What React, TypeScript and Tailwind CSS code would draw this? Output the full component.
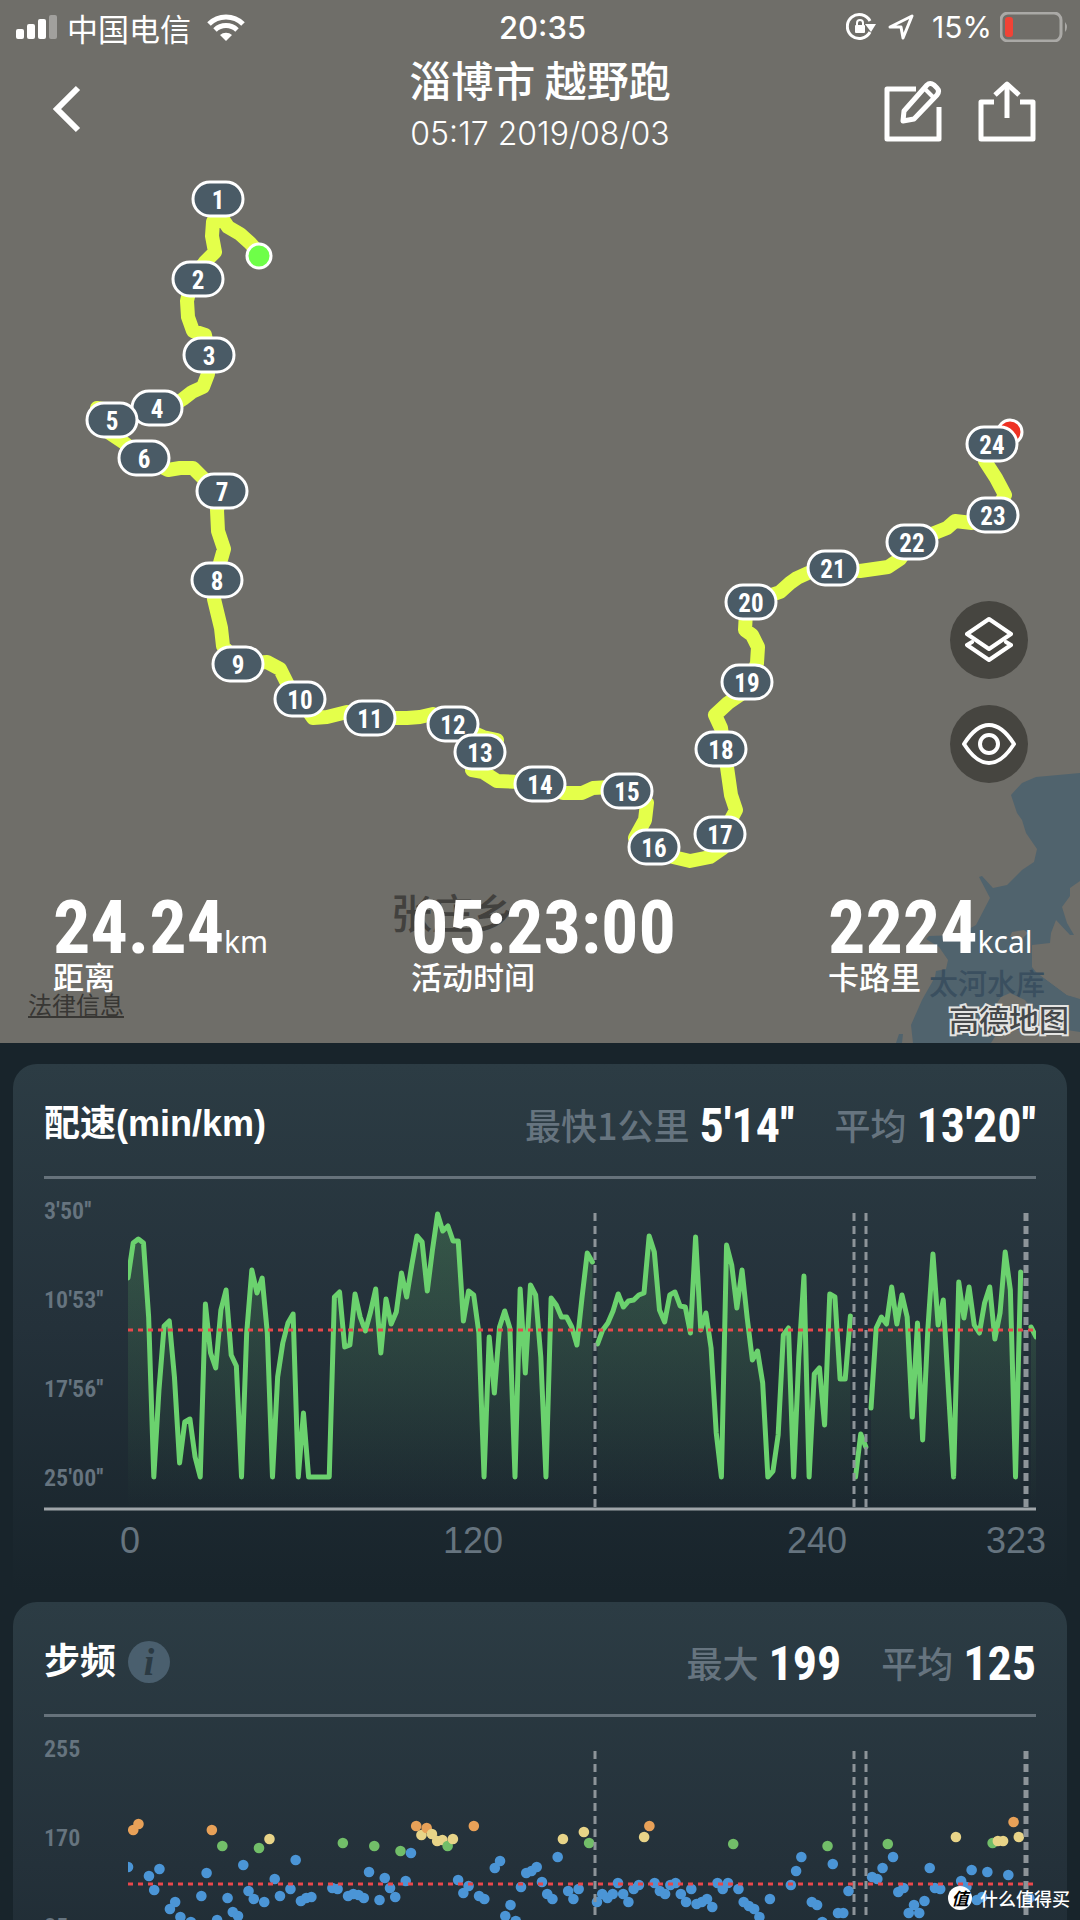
import type { ReactNode } from "react";

const NUM = "font-['Liberation_Sans_Narrow','Roboto_Condensed','Liberation_Sans',sans-serif]";

const PLOT_TOP = 23;
const PLOT_LEFT = 84;
const PLOT_RIGHT = 992;
const PLOT_BOTTOM = 318;

// one entry per sample, each inner list is a stretch between two pauses
const paceRuns = [
  {
    start: 0,
    values: [
      88, 53, 49, 53, 127, 287, 200, 136, 131, 187, 273, 232, 229, 267, 287, 114, 163, 178, 120, 100, 165, 176, 287,
      143, 80, 103, 88, 143, 287, 187, 153, 133, 124, 287, 223, 287, 287, 287, 287, 287, 107, 102, 157, 155, 104, 127,
      141, 122, 99, 163, 109, 134, 122, 83, 107, 75, 46, 52, 101, 60, 24, 41, 36, 51, 51, 131, 101, 105, 143, 287,
      147, 203, 137, 121, 138, 287, 99, 183, 95, 105, 167, 287, 108, 115, 127, 127, 137, 155, 107, 63, 72,
    ],
  },
  {
    start: 91,
    values: [
      154, 140, 133, 121, 104, 117, 111, 110, 105, 103, 46, 62, 120, 132, 105, 102, 116, 117, 143, 47, 140, 123, 158,
      243, 287, 55, 75, 118, 80, 128, 170, 161, 193, 287, 281, 245, 145, 138, 287, 167, 86, 287, 184, 178, 235, 104,
      107, 189, 189, 126,
    ],
  },
  { start: 141, values: [287, 244, 257] },
  {
    start: 144,
    values: [
      218, 138, 127, 134, 97, 134, 105, 127, 227, 133, 250, 140, 64, 135, 110, 200, 287, 92, 128, 97, 135, 143, 113,
      97, 149, 123, 62, 100, 287, 82,
    ],
  },
  { start: 175, values: [137, 147] },
];

// 0 means no reading for that slot
const cadence = [
  139, 102, 96, 0, 148, 162, 141, 0, 181, 174, 189, 0, 194, 0, 168, 145, 102, 192, 118, 170, 184, 188, 137, 163, 171,
  120, 174, 111, 151, 168, 0, 161, 132, 173, 170, 169, 0, 0, 0, 160, 161, 115, 168, 166, 167, 170, 144, 118, 172, 150,
  160, 169, 123, 153, 125, 98, 107, 100, 106, 113, 112, 118, 111, 152, 165, 158, 98, 168, 171, 0, 140, 133, 188, 177,
  193, 159, 145, 143, 139, 154, 166, 171, 129, 111, 163, 171, 161, 104, 115, 174, 166, 170, 166, 155, 166, 174, 161,
  157, 109, 98, 155, 163, 166, 157, 155, 166, 174, 161, 176, 174, 171, 179, 155, 161, 155, 116, 161, 174, 178, 181,
  189, 0, 171, 0, 0, 0, 157, 143, 129, 0, 174, 177, 194, 118, 136, 185, 185, 163, 0, 0, 0, 0, 149, 151, 140, 116, 129,
  164, 160, 185, 177, 185, 173, 140, 160, 161, 0, 0, 109, 153, 159, 142, 172, 169, 144, 115, 113, 113, 147, 94, 109,
  0, 170,
];

const pauses = [
  { x: 551, width: 3 },
  { x: 810, width: 3 },
  { x: 822, width: 3 },
  { x: 982, width: 5 },
];

const markers = [
  [218, 199], [198, 279], [209, 355], [157, 408], [112, 420], [144, 458], [222, 491], [217, 580],
  [238, 664], [300, 699], [370, 718], [453, 724], [480, 752], [540, 784], [627, 791], [654, 847],
  [720, 834], [721, 749], [747, 682], [751, 602], [833, 568], [912, 542], [993, 515], [992, 444],
];

const route =
  "259,253 250,243 240,234 228,227 218,212 213,222 212,236 215,252 205,262 192,279 187,301 188,317 193,331 205,335 209,355 208,374 203,387 192,392 183,399 157,416 140,415 97,408 105,430 123,442 144,458 168,470 180,468 193,468 203,478 222,491 217,510 218,531 224,549 220,563 217,580 214,599 221,628 223,646 238,664 267,662 280,669 288,685 300,699 313,718 327,717 347,712 370,718 407,718 420,717 433,714 453,724 483,737 497,740 480,752 472,770 483,772 497,781 520,782 540,784 563,793 582,793 593,788 610,787 627,791 647,803 645,820 635,838 654,847 673,857 690,861 710,857 723,848 728,825 736,810 731,795 727,767 724,749 721,728 715,715 728,703 747,690 757,663 758,647 752,635 745,630 746,612 751,602 780,592 790,583 797,578 808,573 833,568 860,571 888,567 900,559 912,542 937,532 947,528 955,521 972,523 993,515 1005,495 996,478 985,461 992,444 1010,432";

function dotColor(y: number) {
  if (y <= 102) return "#e8a158";
  if (y <= 113) return "#e8d488";
  if (y <= 123) return "#72be69";
  return "#4b95d6";
}

function RouteMap() {
  return (
    <svg viewBox="0 0 1080 1043" className="col-start-1 row-start-1 block w-full bg-[#6f6e69]">
      <g fill="#50636d">
        <path d="M1080 773L1036 777L1022 783L1011 795L1017 813L1022 820L1026 833L1037 849L1034 862L1022 870L1007 885L993 888L982 876L979 877L990 898L976 925L958 935L929 936L926 939L939 947L948 960L946 969L936 971L935 977L922 1000L911 1025L913 1043H1080V999L1067 995L1036 972L1032 967V945L1050 943L1051 933L1056 920L1070 935L1074 935L1067 923L1062 907L1070 896V888L1080 881Z" />
        <path d="M896 1043L899 1034L903 1034L902 1043Z" />
      </g>
      <g fill="#6f6e69">
        <path d="M991 1043L996 1035L1008 1030H1067L1080 1032V1043Z" />
        <path d="M994 1008L1001 997L1010 993L1025 1000L1036 1016L1044 1026L1010 1028L998 1020Z" />
        <path d="M1032 945H1080V998L1067 995L1036 972Z" />
        <path d="M1010 937L1012 932L1024 930L1028 933L1022 939Z" />
      </g>
      <text x="391" y="929" fontSize="41" fontWeight="500" fill="#42413e" className="font-['Noto_Sans_CJK_SC',sans-serif]">
        张庄乡
      </text>
      <text x="929" y="995" fontSize="29" fontWeight="500" fill="#3a4f5f" className="font-['Noto_Sans_CJK_SC',sans-serif]">
        太河水库
      </text>
      <polyline points={route} fill="none" stroke="#e4ff4a" strokeWidth="14" strokeLinejoin="round" strokeLinecap="round" />
      <circle cx="259" cy="256" r="12" fill="#6eff48" stroke="#fff" strokeWidth="3" />
      <circle cx="1010" cy="432" r="12" fill="#ee3224" stroke="#fff" strokeWidth="3" />
      {markers.map(([x, y], i) => (
        <g key={i}>
          <rect x={x - 25} y={y - 17} width="50" height="34" rx="17" fill="#4a5b66" stroke="#fff" strokeWidth="3" />
          <text x={x} y={y + 10} fontSize="25" fontWeight="700" fill="#fff" textAnchor="middle" className={NUM}>
            {i + 1}
          </text>
        </g>
      ))}
    </svg>
  );
}

function StatusBar() {
  return (
    <div className="grid h-[54px] grid-cols-[1fr_auto_1fr] items-center pr-[11px] pl-4 text-[31px] leading-none">
      <div className="flex items-center">
        <svg width="41" height="24" viewBox="0 0 41 24" fill="#fff">
          <rect x="0" y="14" width="8" height="10" rx="2" />
          <rect x="11" y="9" width="8" height="15" rx="2" />
          <rect x="22" y="4" width="8" height="20" rx="2" />
          <rect x="33" y="0" width="8" height="24" rx="2" opacity=".35" />
        </svg>
        <span className="ml-2.5">中国电信</span>
        <svg width="38" height="28" viewBox="0 0 38 28" fill="none" stroke="#fff" strokeWidth="5" className="ml-4">
          <path d="M2 11A24 24 0 0 1 36 11" />
          <path d="M8 17A16 16 0 0 1 30 17" />
          <path d="M19 28L13 22A9 9 0 0 1 25 22Z" fill="#fff" stroke="none" />
        </svg>
      </div>
      <span className="font-['Inter',sans-serif] text-[31px] font-medium">20:35</span>
      <div className="flex items-center justify-end gap-2">
        <svg width="32" height="32" viewBox="0 0 32 32" fill="none" stroke="#fff" strokeWidth="3">
          <path d="M24 21A12 12 0 1 1 24 10" />
          <path d="M19 13H30L25 21Z" fill="#fff" stroke="none" />
          <rect x="9" y="14" width="10" height="8" rx="1" fill="#fff" stroke="none" />
          <path d="M11 15V12A3 3 0 0 1 17 12V15" strokeWidth="2" />
        </svg>
        <svg width="38" height="28" viewBox="0 0 38 28" fill="none" stroke="#fff" strokeWidth="3" strokeLinejoin="round">
          <path d="M4 14L26 3L17 25L15 14Z" />
        </svg>
        <span className="font-['Inter',sans-serif] text-[30px]">15%</span>
        <svg width="69" height="30" viewBox="0 0 69 30">
          <rect x="1" y="1" width="60" height="28" rx="7" fill="none" stroke="#aaa9a6" strokeWidth="3" />
          <rect x="5" y="5" width="8" height="20" rx="3" fill="#f14336" />
          <path d="M65 10Q69 15 65 20Z" fill="#aaa9a6" />
        </svg>
      </div>
    </div>
  );
}

function Stat({ value, unit, label }: { value: string; unit?: string; label: string }) {
  return (
    <div>
      <p className="flex items-baseline whitespace-nowrap">
        <span className={NUM + " text-[74px] leading-[64px] font-bold"}>{value}</span>
        {unit && <span className="font-['Noto_Sans',sans-serif] text-[30px] leading-none">{unit}</span>}
      </p>
      <p className="text-[31px] leading-8 font-medium">{label}</p>
    </div>
  );
}

function Card({ title, items, children }: { title: ReactNode; items: { label: string; value: string }[]; children: ReactNode }) {
  return (
    <section className="mx-[13px] rounded-t-3xl bg-linear-to-b from-[#2c3c44] via-[#24313a] to-[#18242b] px-[31px]">
      <div className="flex h-[115px] items-center justify-between border-b-3 border-[#66727b] pt-2">
        <h2 className="flex items-center gap-3 font-['Liberation_Sans','Noto_Sans_CJK_SC',sans-serif] text-[36px] leading-none font-bold">
          {title}
        </h2>
        <dl className="flex gap-10">
          {items.map(({ label, value }) => (
            <div key={label} className="flex items-center gap-2.5">
              <dt className="text-[36px] leading-none font-medium text-[#66747f]">{label}</dt>
              <dd className={NUM + " pt-1 text-[48px] leading-none font-bold"}>{value}</dd>
            </div>
          ))}
        </dl>
      </div>
      {children}
    </section>
  );
}

function ChartFrame({ yLabels, average, children }: { yLabels: string[]; average: number; children: ReactNode }) {
  return (
    <svg viewBox="0 0 992 400" className="mt-[11px] block w-full overflow-visible">
      {yLabels.map((label, i) => (
        <text key={label} x="0" y={29 + i * 89} fontSize="24" fontWeight="600" fill="#66747f" className={NUM}>
          {label}
        </text>
      ))}
      {children}
      {pauses.map(({ x, width }) => (
        <line key={x} x1={x} x2={x} y1={PLOT_TOP} y2={PLOT_BOTTOM} stroke="#8d9499" strokeWidth={width} strokeDasharray="8 5" />
      ))}
      <line x1={PLOT_LEFT} x2={PLOT_RIGHT} y1={average} y2={average} stroke="#e8484c" strokeWidth="3" strokeDasharray="5 5" />
      <line x1="0" x2={PLOT_RIGHT} y1="319" y2="319" stroke="#9fa5a9" strokeWidth="3" />
      <g fontSize="36" fill="#66747f" textAnchor="middle" className="font-['Liberation_Sans',sans-serif]">
        <text x="86" y="363">0</text>
        <text x="429" y="363">120</text>
        <text x="773" y="363">240</text>
        <text x="972" y="363">323</text>
      </g>
    </svg>
  );
}

function PaceChart() {
  const step = 5.16;
  return (
    <ChartFrame yLabels={["3'50''", "10'53''", "17'56''", "25'00''"]} average={140}>
      <defs>
        <linearGradient id="pace" gradientUnits="userSpaceOnUse" x1="0" x2="0" y1="20" y2={PLOT_BOTTOM}>
          <stop offset="0" stopColor="#6bd26e" stopOpacity=".22" />
          <stop offset="1" stopColor="#6bd26e" stopOpacity="0" />
        </linearGradient>
        <clipPath id="plot">
          <rect x={PLOT_LEFT} y="0" width={PLOT_RIGHT - PLOT_LEFT} height={PLOT_BOTTOM} />
        </clipPath>
      </defs>
      <g clipPath="url(#plot)">
        {paceRuns.map(({ start, values }) => {
          const xs = values.map((_, i) => PLOT_LEFT + (start + i) * step);
          const points = values.map((y, i) => xs[i] + "," + y).join(" ");
          const area = xs[0] + "," + PLOT_BOTTOM + " " + points + " " + xs[xs.length - 1] + "," + PLOT_BOTTOM;
          return (
            <g key={start}>
              <polygon points={area} fill="url(#pace)" />
              <polyline points={points} fill="none" stroke="#6bd26e" strokeWidth="5" strokeLinejoin="round" strokeLinecap="round" />
            </g>
          );
        })}
      </g>
    </ChartFrame>
  );
}

function CadenceChart() {
  const step = 5.24;
  // readings between the first two pauses start half a slot late
  const slotX = (i: number) => PLOT_LEFT + (i > 88 && i < 138 ? i + 0.5 : i) * step;
  return (
    <ChartFrame yLabels={["255", "170", "85", "0"]} average={156}>
      <g clipPath="url(#plot)">
        {cadence.map((y, i) => y > 0 && <circle key={i} cx={slotX(i)} cy={y} r="5.3" fill={dotColor(y)} />)}
      </g>
    </ChartFrame>
  );
}

export default function App() {
  return (
    <div className="relative h-screen overflow-hidden bg-[#18242b] font-['Noto_Sans_CJK_SC',sans-serif] text-white">
      <div className="grid">
        <RouteMap />
        <div className="col-start-1 row-start-1 flex flex-col">
          <StatusBar />
          <header className="grid grid-cols-[1fr_auto_1fr] items-center px-11">
            <button aria-label="返回" className="flex h-16 w-11 items-center justify-center">
              <svg width="30" height="48" viewBox="0 0 30 48" fill="none" stroke="#fff" strokeWidth="6">
                <path d="M27 3L6 24L27 45" />
              </svg>
            </button>
            <div className="text-center">
              <h1 className="text-[42px] leading-[50px] font-medium">淄博市 越野跑</h1>
              <p className="font-['Inter',sans-serif] text-[32px] leading-[60px] font-light">05:17 2019/08/03</p>
            </div>
            <div className="flex items-center justify-end gap-9 pt-1">
              <button aria-label="编辑">
                <svg width="58" height="62" viewBox="0 0 58 62" fill="none" stroke="#fff" strokeWidth="5" strokeLinejoin="round">
                  <path d="M32 9H3V59H55V27" />
                  <path d="M20 31L43 5Q46 2 50 5L53 8Q56 11 53 15L30 39L19 41Z" />
                  <path d="M41 9L49 17" strokeWidth="4" />
                </svg>
              </button>
              <button aria-label="分享">
                <svg width="58" height="62" viewBox="0 0 58 62" fill="none" stroke="#fff" strokeWidth="5" strokeLinejoin="round">
                  <path d="M16 22H3V59H55V22H42" />
                  <path d="M29 38V5" />
                  <path d="M17 15L29 4L41 15" />
                </svg>
              </button>
            </div>
          </header>
          <div className="mt-auto mr-[52px] flex flex-col items-end gap-[26px]">
            <button aria-label="图层" className="flex size-[78px] items-center justify-center rounded-full bg-[#464540]">
              <svg width="48" height="46" viewBox="0 0 48 46" fill="none" stroke="#fff" strokeWidth="4" strokeLinejoin="round" strokeLinecap="round">
                <path d="M24 2L46 17L24 32L2 17Z" />
                <path d="M7 25L2 28L24 43L46 28L41 25" />
              </svg>
            </button>
            <button aria-label="显示" className="flex size-[78px] items-center justify-center rounded-full bg-[#464540]">
              <svg width="54" height="42" viewBox="0 0 54 42" fill="none" stroke="#fff" strokeWidth="4" strokeLinejoin="round">
                <path d="M2 21Q14 2 27 2T52 21Q40 40 27 40T2 21Z" />
                <circle cx="27" cy="21" r="9" />
              </svg>
            </button>
          </div>
          <div className="mt-[113px] grid grid-cols-[358fr_417fr_252fr] pl-[53px]">
            <Stat value="24.24" unit="km" label="距离" />
            <Stat value="05:23:00" label="活动时间" />
            <Stat value="2224" unit="kcal" label="卡路里" />
          </div>
          <div className="flex h-[51px] items-start justify-between pr-[11px] pl-7">
            <a href="#legal" className="border-b-2 border-[#383734] text-[24px] leading-6 text-[#383734]">
              法律信息
            </a>
            <span className="pt-2.5 text-[30px] leading-8 font-medium text-[#45484a] [-webkit-text-stroke:4px_#e4e4e2] [paint-order:stroke]">高德地图</span>
          </div>
        </div>
      </div>

      <main className="mt-[21px] flex flex-col gap-3">
        <Card
          title="配速(min/km)"
          items={[
            { label: "最快1公里", value: "5'14''" },
            { label: "平均", value: "13'20''" },
          ]}
        >
          <PaceChart />
        </Card>
        <Card
          title={
            <>
              步频
              <button aria-label="说明" className="flex size-[42px] items-center justify-center rounded-full bg-[#4a5f6e] font-['Liberation_Serif',serif] text-[38px] leading-none font-bold text-[#2b3a43] italic">
                i
              </button>
            </>
          }
          items={[
            { label: "最大", value: "199" },
            { label: "平均", value: "125" },
          ]}
        >
          <CadenceChart />
        </Card>
      </main>

      <div className="absolute right-2.5 bottom-2.5 flex items-center gap-2 text-[18px] leading-6 font-medium">
        <span className="flex size-6 items-center justify-center rounded-full bg-white text-[17px] font-bold text-black italic">值</span>
        什么值得买
      </div>
    </div>
  );
}
